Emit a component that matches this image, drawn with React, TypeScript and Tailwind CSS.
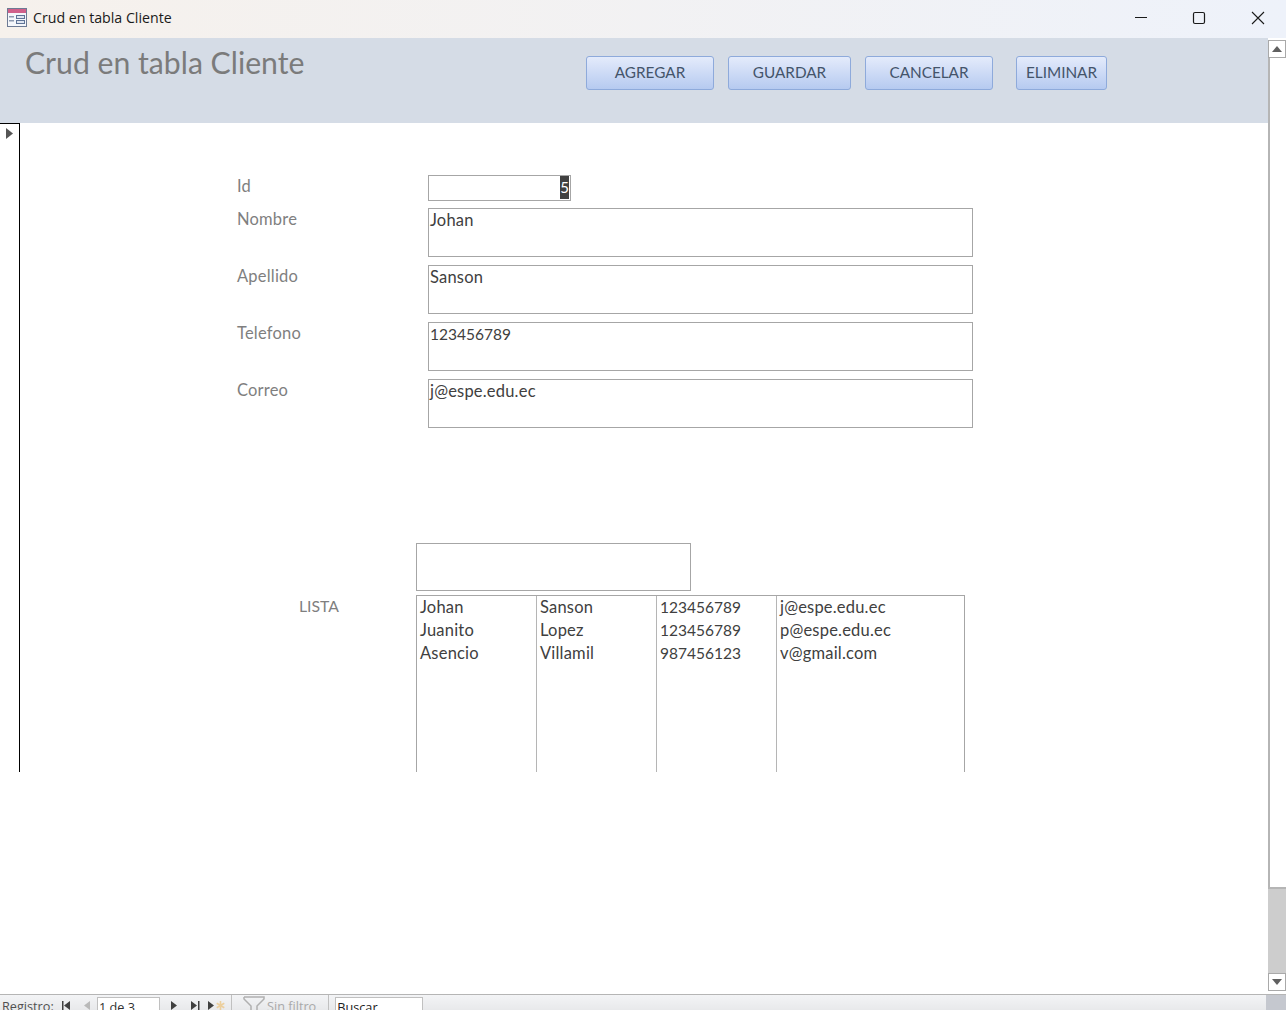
const fieldRows = [
  { label: "Nombre", value: "Johan" },
  { label: "Apellido", value: "Sanson" },
  { label: "Telefono", value: "123456789", digits: true },
  { label: "Correo", value: "j@espe.edu.ec" },
];

const clientes = [
  ["Johan", "Sanson", "123456789", "j@espe.edu.ec"],
  ["Juanito", "Lopez", "123456789", "p@espe.edu.ec"],
  ["Asencio", "Villamil", "987456123", "v@gmail.com"],
];

const buttons = [
  { text: "AGREGAR", cls: "w-[128px]" },
  { text: "GUARDAR", cls: "ml-[14px] w-[123px]" },
  { text: "CANCELAR", cls: "ml-[14px] w-[128px]" },
  { text: "ELIMINAR", cls: "ml-[23px] w-[91px]" },
];

const FormIcon = () => (
  <svg width="20" height="19" viewBox="0 0 20 19" className="shrink-0">
    <rect x="0.5" y="0.5" width="19" height="18" fill="#f4f6fa" stroke="#6d7a94" />
    <rect x="1" y="1" width="18" height="4" fill="#d0608a" />
    <rect x="2" y="8" width="5" height="1.5" fill="#8d99b0" />
    <rect x="2" y="12" width="5" height="1.5" fill="#8d99b0" />
    <rect x="9.5" y="7.5" width="8" height="3" fill="#dfe5f0" stroke="#5f7396" strokeWidth="1" />
    <rect x="9.5" y="12.5" width="8" height="3" fill="#dfe5f0" stroke="#5f7396" strokeWidth="1" />
  </svg>
);

const WindowControls = () => (
  <div className="flex items-center">
    <svg width="14" height="14" viewBox="0 0 14 14" className="mr-[44px]">
      <path d="M1 6.5h12" stroke="#1a1a1a" strokeWidth="1" />
    </svg>
    <svg width="14" height="14" viewBox="0 0 14 14" className="mr-[45px]">
      <rect x="1.5" y="1.5" width="11" height="11" rx="1.5" fill="none" stroke="#1a1a1a" strokeWidth="1.2" />
    </svg>
    <svg width="14" height="14" viewBox="0 0 14 14" className="mr-[21px]">
      <path d="M1 1l12 12M13 1L1 13" stroke="#1a1a1a" strokeWidth="1.1" />
    </svg>
  </div>
);

const ScrollArrow = ({ up }: { up?: boolean }) => (
  <div className="flex h-[18px] w-[18px] shrink-0 items-center justify-center border border-[#a9a9a9] bg-white">
    <svg width="10" height="6" viewBox="0 0 10 6">
      <path d={up ? "M5 0l5 6H0z" : "M5 6L0 0h10z"} fill="#606060" />
    </svg>
  </div>
);

const NavIcon = ({ d, fill = "#404040", className = "" }: { d: string; fill?: string; className?: string }) => (
  <svg width="9" height="9" viewBox="0 0 9 9" className={className}>
    <path d={d} fill={fill} />
  </svg>
);

const App = () => {
  return (
    <div className="flex h-[1010px] w-[1286px] flex-col overflow-hidden bg-white font-['Lato','Liberation_Sans',sans-serif]">
      <div className="flex h-[38px] shrink-0 items-center justify-between bg-gradient-to-r from-[#f6f1ec] to-[#eef2fa] pb-[2px] pl-[7px]">
        <div className="flex items-center gap-[6px]">
          <FormIcon />
          <span className="font-['Open_Sans',sans-serif] text-[14.2px] text-[#1a1a1a]">Crud en tabla Cliente</span>
        </div>
        <WindowControls />
      </div>

      <div className="flex min-h-0 flex-1">
        <div className="flex min-w-0 flex-1 flex-col">
          <div className="flex h-[85px] shrink-0 items-start bg-[#d5dce6] pl-[25px]">
            <h1 className="mt-[4px] w-[561px] text-[30.2px] leading-[40px] text-[#7b7b7b]">Crud en tabla Cliente</h1>
            <div className="mt-[18px] flex">
              {buttons.map((b) => (
                <button
                  key={b.text}
                  className={`h-[34px] rounded-[3px] border border-[#8eaadb] bg-gradient-to-b from-[#e4ebfb] to-[#b6caf0] pb-[2px] text-[15.3px] text-[#44546a] ${b.cls}`}
                >
                  {b.text}
                </button>
              ))}
            </div>
          </div>

          <div className="flex">
            <div className="flex h-[649px] w-[20px] shrink-0 justify-start border-r border-t border-black pt-[4px]">
              <svg width="7" height="11" viewBox="0 0 7 11" className="ml-[6px]">
                <path d="M0 0l7 5.5L0 11z" fill="#555" />
              </svg>
            </div>

            <div className="h-[649px] flex-1 overflow-hidden text-[16.5px] leading-[20px] tracking-[0.2px]">
              <div className="ml-[217px] mt-[52px] flex h-[26px]">
                <span className="mt-[1px] w-[191px] text-[#7f7f7f]">Id</span>
                <div className="flex h-[26px] w-[143px] justify-end border border-[#a6a6a6] pr-px">
                  <span className="h-[23px] w-[9px] overflow-hidden bg-[#404040] text-center text-[15px] leading-[22px] tracking-normal text-white">5</span>
                </div>
              </div>

              <div className="ml-[217px] mt-[7px] flex flex-col gap-2">
                {fieldRows.map((row) => (
                  <div key={row.label} className="flex h-[49px]">
                    <span className="mt-px w-[191px] text-[#7f7f7f]">{row.label}</span>
                    <div className={`h-[49px] w-[545px] border border-[#a6a6a6] pl-px pt-px text-[#404040] ${row.digits ? "text-[15.5px] tracking-normal" : ""}`}>
                      {row.value}
                    </div>
                  </div>
                ))}
              </div>

              <div className="ml-[396px] mt-[115px] h-[48px] w-[275px] border border-[#a6a6a6]" />

              <div className="ml-[279px] mt-[4px] flex">
                <span className="mt-[1px] w-[117px] text-[15.8px] tracking-normal text-[#7f7f7f]">LISTA</span>
                <div className="grid h-[180px] w-[549px] grid-cols-[120px_120px_120px_189px] border border-[#a6a6a6] text-[#404040]">
                  {[0, 1, 2, 3].map((col) => (
                    <div key={col} className={`pl-[3px] ${col < 3 ? "border-r border-[#b5b5b5]" : ""}`}>
                      {clientes.map((c, i) => (
                        <div key={i} className={`h-[23px] leading-[23px] ${col === 2 ? "text-[15.5px] tracking-normal" : ""}`}>
                          {c[col]}
                        </div>
                      ))}
                    </div>
                  ))}
                </div>
              </div>
            </div>
          </div>
        </div>

        <div className="mt-[2px] flex h-[951px] w-[18px] shrink-0 flex-col bg-white">
          <ScrollArrow up />
          <div className="flex-1 border-b-[2px] border-l-[2px] border-[#b5b5b5]" />
          <div className="h-[84px] shrink-0 bg-[#cdcdcd]" />
          <ScrollArrow />
        </div>
      </div>

      <div className="flex h-[16px] shrink-0 items-start border-t border-[#b5b5b5] bg-gradient-to-b from-[#f3f4f6] to-[#e8e9eb] font-['Open_Sans',sans-serif] text-[12.7px] leading-[22px] text-[#505050]">
        <span className="ml-[2px] w-[60px]">Registro:</span>
        <NavIcon className="mt-[6px]" d="M0 0h1.5v9H0zM8 0v9L2 4.5z" />
        <NavIcon className="ml-[12px] mt-[6px]" d="M7 0v9L1 4.5z" fill="#b9b9b9" />
        <div className="ml-[5px] mt-[2px] h-[16px] w-[63px] border border-[#c0c0c0] bg-white pl-px leading-[18px] text-[#303030]">1 de 3</div>
        <NavIcon className="ml-[10px] mt-[6px]" d="M1 0l6 4.5L1 9z" />
        <NavIcon className="ml-[12px] mt-[6px]" d="M0 0l6 4.5L0 9zM7 0h1.5v9H7z" />
        <NavIcon className="ml-[7px] mt-[6px]" d="M1 0l6 4.5L1 9z" />
        <NavIcon className="mt-[6px]" d="M3.7 0h1.6v3l2.6-1.5.8 1.4L6.1 4.5l2.6 1.6-.8 1.4-2.6-1.5v3H3.7v-3L1.1 7.5.3 6.1l2.6-1.6L.3 2.9l.8-1.4 2.6 1.5z" fill="#eccf9d" />
        <div className="ml-[6px] h-[16px] w-px bg-[#c0c0c0]" />
        <svg width="22" height="15" viewBox="0 0 22 15" className="ml-[11px] mt-[1px]">
          <path d="M1 1h20v2l-7 7v5M1 1v2l7 7v5" fill="none" stroke="#b0b0b0" strokeWidth="1.5" />
        </svg>
        <span className="ml-[2px] text-[#a9a9a9]">Sin filtro</span>
        <div className="ml-[12px] h-[16px] w-px bg-[#c0c0c0]" />
        <div className="ml-[6px] mt-[2px] h-[16px] w-[88px] border border-[#c0c0c0] bg-white pl-px leading-[18px] text-[#202020]">Buscar</div>
        <div className="ml-auto h-[16px] w-[20px] bg-[#c5c8cf]" />
      </div>
    </div>
  );
};

export default App;
